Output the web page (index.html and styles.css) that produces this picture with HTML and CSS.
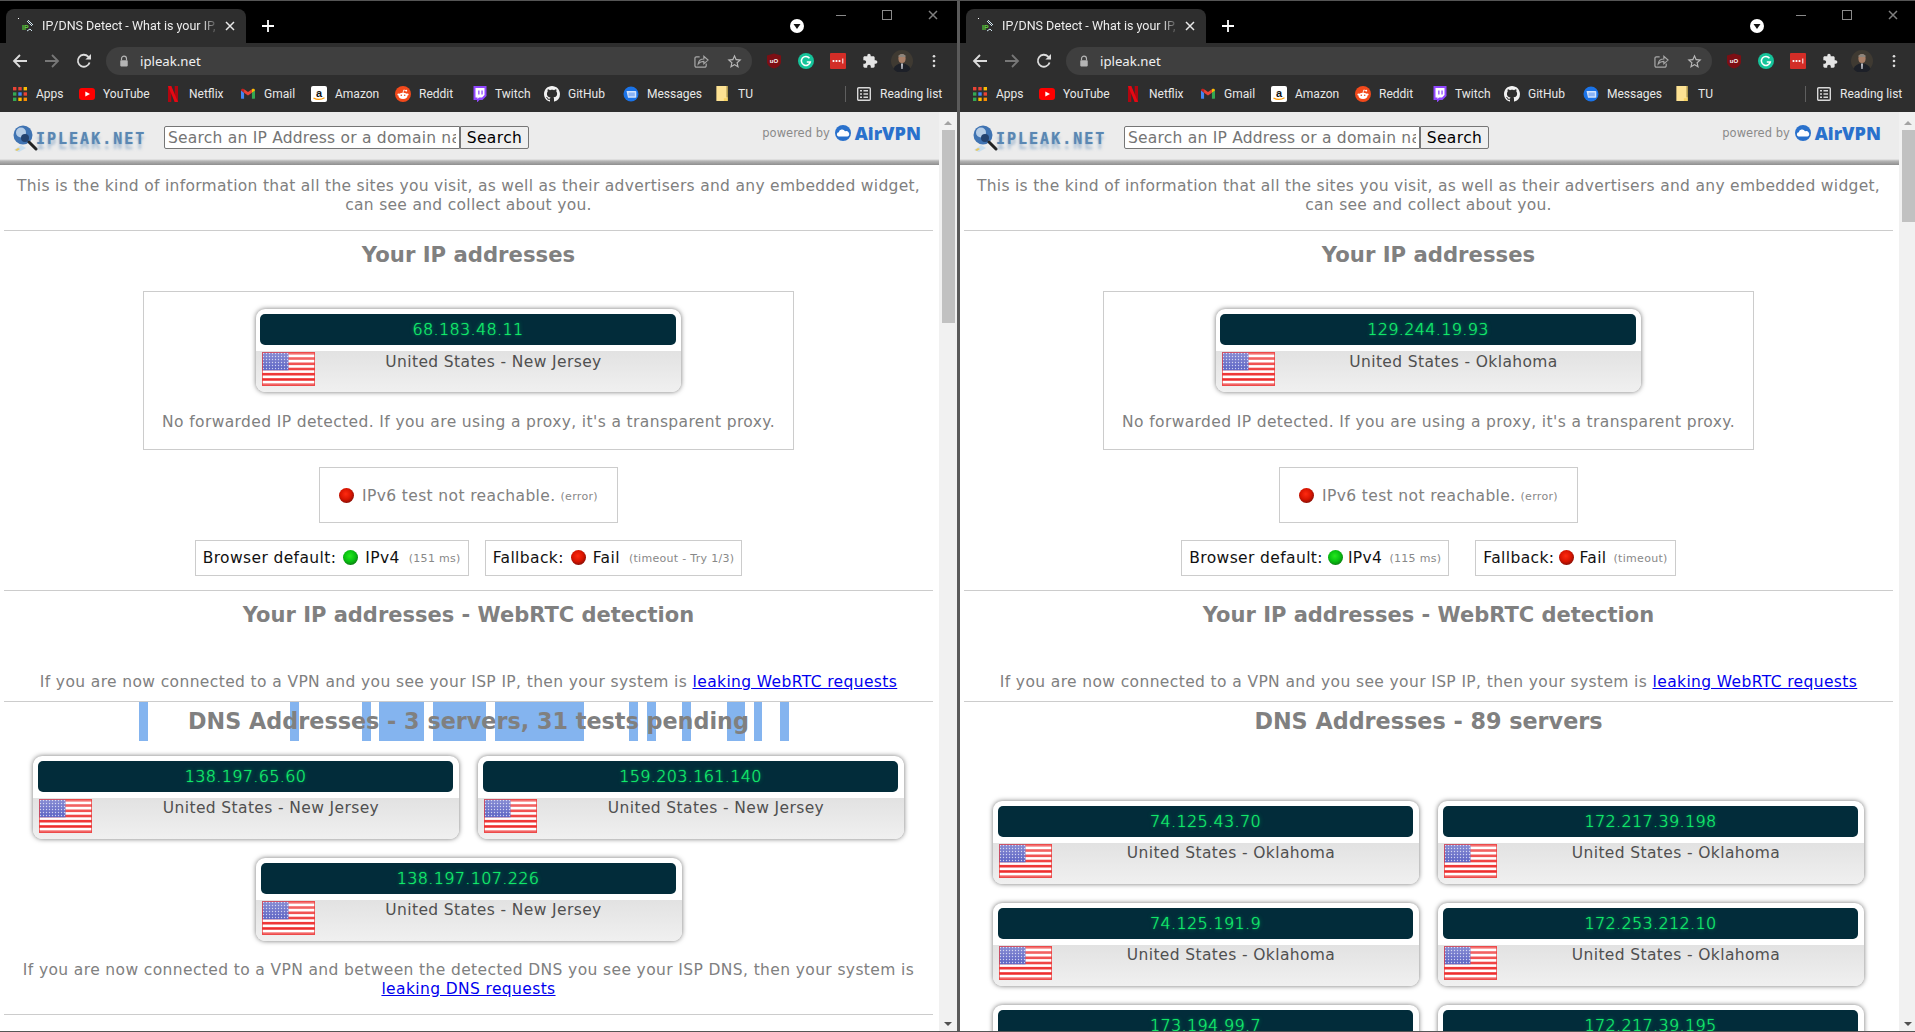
FILE: index.html
```html
<!DOCTYPE html>
<html lang="en">
<head>
<meta charset="utf-8">
<title>IP/DNS Detect</title>
<link rel="stylesheet" href="styles.css">
</head>
<body>
<svg class="defs" aria-hidden="true">
  <defs>
    <linearGradient id="gloss" x1="0" y1="0" x2="0" y2="1">
      <stop offset="0" stop-color="#fff" stop-opacity=".35"/>
      <stop offset=".5" stop-color="#fff" stop-opacity=".12"/>
      <stop offset=".8" stop-color="#fff" stop-opacity="0"/>
      <stop offset="1" stop-color="#fff" stop-opacity=".35"/>
    </linearGradient>
    <pattern id="stars" width="3" height="3" patternUnits="userSpaceOnUse">
      <rect width="3" height="3" fill="#4a52bd"/>
      <circle cx="1.5" cy="1.5" r=".7" fill="#c6c9ee"/>
    </pattern>
  </defs>
  <symbol id="flag" viewBox="0 0 53 34">
    <rect width="53" height="34" fill="#fff"/>
    <rect y="0" width="53" height="2.6" fill="#ee2b2b"/>
    <rect y="5.2" width="53" height="2.6" fill="#ee2b2b"/>
    <rect y="10.5" width="53" height="2.6" fill="#ee2b2b"/>
    <rect y="15.7" width="53" height="2.6" fill="#ee2b2b"/>
    <rect y="20.9" width="53" height="2.6" fill="#ee2b2b"/>
    <rect y="26.2" width="53" height="2.6" fill="#ee2b2b"/>
    <rect y="31.4" width="53" height="2.6" fill="#ee2b2b"/>
    <rect width="26.5" height="18.3" fill="url(#stars)"/>
    <rect width="53" height="34" fill="url(#gloss)"/>
    <rect x=".5" y=".5" width="52" height="33" fill="none" stroke="#e83a3a" stroke-opacity=".7"/>
  </symbol>
  <symbol id="fav" viewBox="0 0 16 16">
    <rect x="0" y="0" width="1" height="1" fill="#fff"/>
    <text x="4" y="12" class="fav-ip">IP</text>
    <path d="M9 3l5 5M10 2l5 5M9 13l3-2 2 2" fill="none" stroke="#cfe3ee" stroke-width="1"/>
  </symbol>
  <symbol id="back" viewBox="0 0 16 16"><path d="M15 8H2M8 2L2 8l6 6" fill="none" stroke="currentColor" stroke-width="1.8"/></symbol>
  <symbol id="fwd" viewBox="0 0 16 16"><path d="M1 8h13M8 2l6 6-6 6" fill="none" stroke="currentColor" stroke-width="1.8"/></symbol>
  <symbol id="reload" viewBox="0 0 16 16"><path d="M13.6 9.5A6 6 0 1 1 12.2 3.6L14 5.2" fill="none" stroke="currentColor" stroke-width="1.8"/><path d="M15 1v5.6H9.4z" fill="currentColor"/></symbol>
  <symbol id="lock" viewBox="0 0 12 14"><path d="M3 6V4.2a3 3 0 0 1 6 0V6" fill="none" stroke="#b5b5b5" stroke-width="1.4"/><rect x="1.5" y="6" width="9" height="7.5" rx="1" fill="#b5b5b5"/></symbol>
  <symbol id="share" viewBox="0 0 16 16"><path d="M6 3H2.5A1.5 1.5 0 0 0 1 4.5v8A1.5 1.5 0 0 0 2.5 14h9a1.5 1.5 0 0 0 1.5-1.5V10" fill="none" stroke="#a8a8a8" stroke-width="1.3"/><path d="M4.500 10.500C5 7 7.500 5.300 10.500 5.300V2.500L15 6.500l-4.500 4V7.800C8 7.800 6 8.600 4.500 10.500z" fill="none" stroke="#a8a8a8" stroke-width="1.2"/></symbol>
  <symbol id="star" viewBox="0 0 24 24"><path fill="#b8b8b8" d="M22 9.24l-7.19-.62L12 2 9.19 8.63 2 9.24l5.46 4.73L5.82 21 12 17.27 18.18 21l-1.63-7.03L22 9.24zM12 15.4l-3.76 2.27 1-4.28-3.32-2.88 4.38-.38L12 6.1l1.71 4.04 4.38.38-3.32 2.88 1 4.28L12 15.4z"/></symbol>
  <symbol id="ublock" viewBox="0 0 16 16"><path d="M8 .5l7 2v6c0 3.500-3 6-7 7-4-1-7-3.500-7-7v-6z" fill="#7d0f14"/><text x="8" y="9.500" class="ub-text">uO</text></symbol>
  <symbol id="gram" viewBox="0 0 16 16"><circle cx="8" cy="8" r="8" fill="#15c39a"/><path d="M11.500 5.200A4.500 4.500 0 1 0 12.300 9H8.800" fill="none" stroke="#fff" stroke-width="1.500"/></symbol>
  <symbol id="lastpass" viewBox="0 0 16 16"><rect width="16" height="16" rx="1" fill="#d32d27"/><circle cx="3.500" cy="8" r="1.100" fill="#fff"/><circle cx="6.500" cy="8" r="1.100" fill="#fff"/><circle cx="9.500" cy="8" r="1.100" fill="#fff"/><rect x="12.300" y="5.500" width="1" height="5" fill="#fff"/></symbol>
  <symbol id="puzzle" viewBox="0 0 24 24"><path fill="#e4e4e4" d="M20.500 11H19V7c0-1.100-.9-2-2-2h-4V3.500C13 2.120 11.880 1 10.500 1S8 2.120 8 3.500V5H4c-1.100 0-1.990.9-1.990 2v3.800H3.500c1.490 0 2.700 1.210 2.700 2.700s-1.210 2.700-2.700 2.700H2V20c0 1.100.9 2 2 2h3.800v-1.500c0-1.490 1.210-2.700 2.700-2.700 1.490 0 2.700 1.210 2.700 2.700V22H17c1.100 0 2-.9 2-2v-4h1.500c1.380 0 2.500-1.120 2.500-2.500S21.880 11 20.500 11z"/></symbol>
  <symbol id="avatar" viewBox="0 0 22 22"><circle cx="11" cy="11" r="11" fill="#3f3a32"/><ellipse cx="11" cy="8.500" rx="3.600" ry="4.500" fill="#a97f67"/><path d="M7.400 5.500Q11 2.500 14.600 5.500L14.200 7H7.800z" fill="#8c857c"/><path d="M2.500 19q2-5.500 8.500-5.500t8.500 5.500a11 11 0 0 1-17 0z" fill="#1d2028"/><path d="M10 13.500h2l-.4 5.500h-1.200z" fill="#c9c9d2"/></symbol>
  <symbol id="dots" viewBox="0 0 4 16"><circle cx="2" cy="2.500" r="1.500" fill="#ddd"/><circle cx="2" cy="8" r="1.500" fill="#ddd"/><circle cx="2" cy="13.500" r="1.500" fill="#ddd"/></symbol>
  <symbol id="apps" viewBox="0 0 14 14">
    <rect x="0" y="0" width="3.400" height="3.400" fill="#ea4335"/><rect x="5.300" y="0" width="3.400" height="3.400" fill="#ea4335"/><rect x="10.600" y="0" width="3.400" height="3.400" fill="#fbbc04"/>
    <rect x="0" y="5.300" width="3.400" height="3.400" fill="#34a853"/><rect x="5.300" y="5.300" width="3.400" height="3.400" fill="#4285f4"/><rect x="10.600" y="5.300" width="3.400" height="3.400" fill="#ea4335"/>
    <rect x="0" y="10.600" width="3.400" height="3.400" fill="#34a853"/><rect x="5.300" y="10.600" width="3.400" height="3.400" fill="#fbbc04"/><rect x="10.600" y="10.600" width="3.400" height="3.400" fill="#fb8c00"/>
  </symbol>
  <symbol id="yt" viewBox="0 0 16 12"><rect width="16" height="12" rx="3" fill="#f00"/><path d="M6.300 3.500L11 6 6.300 8.500z" fill="#fff"/></symbol>
  <symbol id="nf" viewBox="0 0 10 16"><path d="M0 0h3.300v16L0 16z" fill="#b1060f"/><path d="M6.700 0H10v16H6.700z" fill="#b1060f"/><path d="M0 0h3.300L10 16H6.700z" fill="#e50914"/></symbol>
  <symbol id="gm" viewBox="0 0 16 12"><path d="M0 2v9a1 1 0 0 0 1 1h2.500V5z" fill="#4285f4"/><path d="M16 2v9a1 1 0 0 1-1 1h-2.500V5z" fill="#34a853"/><path d="M3.500 5L8 8.300 12.500 5V1L8 4.400 3.500 1z" fill="#ea4335"/><path d="M0 2.500C0 .5 2 0 3.500 1v4z" fill="#c5221f"/><path d="M16 2.500C16 .5 14 0 12.500 1v4z" fill="#fbbc04"/></symbol>
  <symbol id="az" viewBox="0 0 16 16"><rect width="16" height="16" rx="2" fill="#fff"/><text x="8" y="10.500" class="az-text">a</text><path d="M2.500 12q5.500 3 11-.2" fill="none" stroke="#f90" stroke-width="1.300"/></symbol>
  <symbol id="rd" viewBox="0 0 16 16"><circle cx="8" cy="8" r="8" fill="#f2491b"/><ellipse cx="8" cy="9.800" rx="4.500" ry="3.100" fill="#fff"/><circle cx="3.500" cy="8.500" r="1.100" fill="#fff"/><circle cx="12.500" cy="8.500" r="1.100" fill="#fff"/><circle cx="6.300" cy="9.300" r=".8" fill="#f2491b"/><circle cx="9.700" cy="9.300" r=".8" fill="#f2491b"/><path d="M8 7l.7-3 2.300.6" fill="none" stroke="#fff" stroke-width=".8"/><circle cx="11.300" cy="4.700" r=".9" fill="#fff"/></symbol>
  <symbol id="tw" viewBox="0 0 16 16"><path d="M2.500 0H15.500V10L11.500 14H8.500L6 16.500V14H2.500z" fill="#9147ff"/><path d="M4.500 2H13.500V9L11 11.500H8L6.500 13V11.500H4.500z" fill="#fff"/><rect x="7.200" y="4.500" width="1.300" height="4" fill="#9147ff"/><rect x="10.400" y="4.500" width="1.300" height="4" fill="#9147ff"/></symbol>
  <symbol id="gh" viewBox="0 0 16 16"><path fill="#f2f2f2" d="M8 0C3.580 0 0 3.580 0 8c0 3.540 2.290 6.530 5.470 7.590.4.070.55-.17.55-.38 0-.19-.01-.82-.01-1.490-2.010.37-2.530-.49-2.690-.94-.09-.23-.48-.94-.82-1.130-.28-.15-.68-.52-.01-.53.63-.01 1.080.58 1.230.82.72 1.210 1.870.87 2.330.66.07-.52.28-.87.51-1.070-1.780-.2-3.640-.89-3.640-3.950 0-.87.31-1.590.82-2.150-.08-.2-.36-1.020.08-2.120 0 0 .67-.21 2.200.82.64-.18 1.320-.27 2-.27.68 0 1.360.09 2 .27 1.530-1.040 2.200-.82 2.200-.82.44 1.100.16 1.920.08 2.120.51.56.82 1.270.82 2.150 0 3.070-1.870 3.750-3.650 3.950.29.25.54.73.54 1.480 0 1.070-.01 1.930-.01 2.200 0 .21.15.46.55.38A8.013 8.013 0 0016 8c0-4.420-3.580-8-8-8z"/></symbol>
  <symbol id="msg" viewBox="0 0 16 16"><circle cx="8" cy="8" r="7.500" fill="#1a73e8"/><path d="M3.500 5h9a.8.8 0 0 1 .8.8V11a.8.8 0 0 1-.8.8H5z" fill="#d2e3fc"/><path d="M5.500 6.500h6.300v3.800H5.500z" fill="#8ab4f8"/></symbol>
  <symbol id="tu" viewBox="0 0 12 16"><path d="M0 0h11v12h1v4H0z" fill="#fde293"/><path d="M11 0h1v16H8v-3h3z" fill="#f8d464"/></symbol>
  <symbol id="rl" viewBox="0 0 14 14"><rect x=".7" y=".7" width="12.600" height="12.600" rx="1" fill="none" stroke="#d8d8d8" stroke-width="1.400"/><path d="M3 3.800h2M3 7h2M3 10.200h2M6.500 3.800h4.500M6.500 7h4.500M6.500 10.200h4.500" stroke="#d8d8d8" stroke-width="1.400"/></symbol>
  <symbol id="media" viewBox="0 0 14 14"><circle cx="7" cy="7" r="7" fill="#fff"/><path d="M3.500 5h7L7 10z" fill="#111"/></symbol>
  <symbol id="close" viewBox="0 0 10 10"><path d="M1 1l8 8M9 1l-8 8" stroke="#e8e8e8" stroke-width="1.500"/></symbol>
  <symbol id="plus" viewBox="0 0 12 12"><path d="M6 0v12M0 6h12" stroke="#fff" stroke-width="1.800"/></symbol>
  <symbol id="logoglass" viewBox="0 0 26 28">
    <path d="M2 25l7-5 5 3-7 4z" fill="#c9dff0"/><path d="M3 25l3-2 2 1-3 2z" fill="#e9c75e"/>
    <circle cx="11" cy="10" r="9.500" fill="#3f73b2"/><circle cx="9" cy="7.500" r="5" fill="#b6cde6"/><circle cx="13" cy="13" r="4" fill="#24436f"/>
    <path d="M17 17l7 7" stroke="#222" stroke-width="3" stroke-linecap="round"/>
  </symbol>
  <symbol id="airvpn" viewBox="0 0 16 16"><circle cx="8" cy="8" r="8" fill="#2a71cc"/><path d="M3.500 11.500a2.200 2.200 0 0 1 .3-4.300A3.300 3.300 0 0 1 10 6.300a2.700 2.700 0 0 1 2.500 5.200z" fill="#fff"/></symbol>
</svg>

<main class="desktop">

  <section class="window">
    <header class="tabstrip">
      <div class="tab">
        <svg class="fav"><use href="#fav"/></svg>
        <span class="tab-title">IP/DNS Detect - What is your IP, what's</span>
        <svg class="tab-close"><use href="#close"/></svg>
      </div>
      <svg class="new-tab"><use href="#plus"/></svg>
      <svg class="media"><use href="#media"/></svg>
      <div class="controls"><i class="ctl-min"></i><i class="ctl-max"></i><svg class="ctl-close"><use href="#close"/></svg></div>
    </header>
    <div class="toolbar">
      <svg class="nav nav-on"><use href="#back"/></svg>
      <svg class="nav nav-off"><use href="#fwd"/></svg>
      <svg class="nav nav-on"><use href="#reload"/></svg>
      <div class="omnibox">
        <svg class="lock"><use href="#lock"/></svg>
        <span class="url">ipleak.net</span>
        <svg class="omni-share"><use href="#share"/></svg>
        <svg class="omni-star"><use href="#star"/></svg>
      </div>
      <svg class="ext"><use href="#ublock"/></svg>
      <svg class="ext"><use href="#gram"/></svg>
      <svg class="ext"><use href="#lastpass"/></svg>
      <svg class="ext"><use href="#puzzle"/></svg>
      <svg class="avatar"><use href="#avatar"/></svg>
      <svg class="menu"><use href="#dots"/></svg>
    </div>
    <nav class="bookmarks">
      <a class="bm"><svg class="i-apps"><use href="#apps"/></svg>Apps</a>
      <a class="bm"><svg class="i-yt"><use href="#yt"/></svg>YouTube</a>
      <a class="bm"><svg class="i-nf"><use href="#nf"/></svg>Netflix</a>
      <a class="bm"><svg class="i-gm"><use href="#gm"/></svg>Gmail</a>
      <a class="bm"><svg class="i-16"><use href="#az"/></svg>Amazon</a>
      <a class="bm"><svg class="i-16"><use href="#rd"/></svg>Reddit</a>
      <a class="bm"><svg class="i-16"><use href="#tw"/></svg>Twitch</a>
      <a class="bm"><svg class="i-16"><use href="#gh"/></svg>GitHub</a>
      <a class="bm"><svg class="i-16"><use href="#msg"/></svg>Messages</a>
      <a class="bm"><svg class="i-tu"><use href="#tu"/></svg>TU</a>
      <span class="bm-sep"></span>
      <a class="bm bm-rl"><svg class="i-apps"><use href="#rl"/></svg>Reading list</a>
    </nav>
    <div class="viewport">
      <div class="page">
        <div class="site-head">
          <div class="logo"><svg class="logo-glass"><use href="#logoglass"/></svg><span class="logo-text">IPLEAK.NET</span></div>
          <input class="search" type="text" placeholder="Search an IP Address or a domain name">
          <button class="search-btn" type="button">Search</button>
          <div class="powered"><span>powered by</span><svg class="air-icon"><use href="#airvpn"/></svg><b class="air-name">AirVPN</b></div>
        </div>
        <div class="content">
          <p class="intro">This is the kind of information that all the sites you visit, as well as their advertisers and any embedded widget, can see and collect about you.</p>
          <hr>
          <h2 class="title title-ip">Your IP addresses</h2>
          <div class="ip-box">
            <div class="card card-center"><div class="ip">68.183.48.11</div><div class="geo"><svg class="flag"><use href="#flag"/></svg><span class="place">United States - New Jersey</span></div></div>
            <p class="forward">No forwarded IP detected. If you are using a proxy, it's a transparent proxy.</p>
          </div>
          <div class="v6-box"><i class="dot dot-red"></i><span class="v6-text">IPv6 test not reachable.</span> <small class="note">(error)</small></div>
          <div class="tests">
            <div class="test"><span>Browser default:</span><i class="dot dot-green"></i><span>IPv4</span><small class="note">(151 ms)</small></div>
            <div class="test"><span>Fallback:</span><i class="dot dot-red"></i><span>Fail</span><small class="note">(timeout - Try 1/3)</small></div>
          </div>
          <hr class="hr-webrtc">
          <h2 class="title title-webrtc">Your IP addresses - WebRTC detection</h2>
          <p class="line line-webrtc">If you are now connected to a VPN and you see your ISP IP, then your system is <a href="#">leaking WebRTC requests</a></p>
          <hr class="hr-dns">
          <h2 class="title title-dns title-selected">DNS Addresses - 3 servers, 31 tests pending</h2>
          <div class="dns-grid">
            <div class="card"><div class="ip">138.197.65.60</div><div class="geo"><svg class="flag"><use href="#flag"/></svg><span class="place">United States - New Jersey</span></div></div>
            <div class="card"><div class="ip">159.203.161.140</div><div class="geo"><svg class="flag"><use href="#flag"/></svg><span class="place">United States - New Jersey</span></div></div>
            <div class="card card-span"><div class="ip">138.197.107.226</div><div class="geo"><svg class="flag"><use href="#flag"/></svg><span class="place">United States - New Jersey</span></div></div>
          </div>
          <p class="line line-dns">If you are now connected to a VPN and between the detected DNS you see your ISP DNS, then your system is <a href="#">leaking DNS requests</a></p>
          <hr class="hr-torrent">
          <h2 class="title title-torrent">Torrent Address detection</h2>
        </div>
      </div>
      <div class="scrollbar"><i class="arrow-up"></i><i class="thumb thumb-long"></i><i class="arrow-down"></i></div>
    </div>
  </section>

  <div class="divider"></div>

  <section class="window">
    <header class="tabstrip">
      <div class="tab">
        <svg class="fav"><use href="#fav"/></svg>
        <span class="tab-title">IP/DNS Detect - What is your IP, what's</span>
        <svg class="tab-close"><use href="#close"/></svg>
      </div>
      <svg class="new-tab"><use href="#plus"/></svg>
      <svg class="media"><use href="#media"/></svg>
      <div class="controls"><i class="ctl-min"></i><i class="ctl-max"></i><svg class="ctl-close"><use href="#close"/></svg></div>
    </header>
    <div class="toolbar">
      <svg class="nav nav-on"><use href="#back"/></svg>
      <svg class="nav nav-off"><use href="#fwd"/></svg>
      <svg class="nav nav-on"><use href="#reload"/></svg>
      <div class="omnibox">
        <svg class="lock"><use href="#lock"/></svg>
        <span class="url">ipleak.net</span>
        <svg class="omni-share"><use href="#share"/></svg>
        <svg class="omni-star"><use href="#star"/></svg>
      </div>
      <svg class="ext"><use href="#ublock"/></svg>
      <svg class="ext"><use href="#gram"/></svg>
      <svg class="ext"><use href="#lastpass"/></svg>
      <svg class="ext"><use href="#puzzle"/></svg>
      <svg class="avatar"><use href="#avatar"/></svg>
      <svg class="menu"><use href="#dots"/></svg>
    </div>
    <nav class="bookmarks">
      <a class="bm"><svg class="i-apps"><use href="#apps"/></svg>Apps</a>
      <a class="bm"><svg class="i-yt"><use href="#yt"/></svg>YouTube</a>
      <a class="bm"><svg class="i-nf"><use href="#nf"/></svg>Netflix</a>
      <a class="bm"><svg class="i-gm"><use href="#gm"/></svg>Gmail</a>
      <a class="bm"><svg class="i-16"><use href="#az"/></svg>Amazon</a>
      <a class="bm"><svg class="i-16"><use href="#rd"/></svg>Reddit</a>
      <a class="bm"><svg class="i-16"><use href="#tw"/></svg>Twitch</a>
      <a class="bm"><svg class="i-16"><use href="#gh"/></svg>GitHub</a>
      <a class="bm"><svg class="i-16"><use href="#msg"/></svg>Messages</a>
      <a class="bm"><svg class="i-tu"><use href="#tu"/></svg>TU</a>
      <span class="bm-sep"></span>
      <a class="bm bm-rl"><svg class="i-apps"><use href="#rl"/></svg>Reading list</a>
    </nav>
    <div class="viewport">
      <div class="page">
        <div class="site-head">
          <div class="logo"><svg class="logo-glass"><use href="#logoglass"/></svg><span class="logo-text">IPLEAK.NET</span></div>
          <input class="search" type="text" placeholder="Search an IP Address or a domain name">
          <button class="search-btn" type="button">Search</button>
          <div class="powered"><span>powered by</span><svg class="air-icon"><use href="#airvpn"/></svg><b class="air-name">AirVPN</b></div>
        </div>
        <div class="content">
          <p class="intro">This is the kind of information that all the sites you visit, as well as their advertisers and any embedded widget, can see and collect about you.</p>
          <hr>
          <h2 class="title title-ip">Your IP addresses</h2>
          <div class="ip-box">
            <div class="card card-center"><div class="ip">129.244.19.93</div><div class="geo"><svg class="flag"><use href="#flag"/></svg><span class="place">United States - Oklahoma</span></div></div>
            <p class="forward">No forwarded IP detected. If you are using a proxy, it's a transparent proxy.</p>
          </div>
          <div class="v6-box"><i class="dot dot-red"></i><span class="v6-text">IPv6 test not reachable.</span> <small class="note">(error)</small></div>
          <div class="tests tests-wide">
            <div class="test"><span>Browser default:</span><i class="dot dot-green"></i><span>IPv4</span><small class="note">(115 ms)</small></div>
            <div class="test"><span>Fallback:</span><i class="dot dot-red"></i><span>Fail</span><small class="note">(timeout)</small></div>
          </div>
          <hr class="hr-webrtc">
          <h2 class="title title-webrtc">Your IP addresses - WebRTC detection</h2>
          <p class="line line-webrtc">If you are now connected to a VPN and you see your ISP IP, then your system is <a href="#">leaking WebRTC requests</a></p>
          <hr class="hr-dns">
          <h2 class="title title-dns">DNS Addresses - 89 servers</h2>
          <div class="dns-grid dns-grid-low">
            <div class="card"><div class="ip">74.125.43.70</div><div class="geo"><svg class="flag"><use href="#flag"/></svg><span class="place">United States - Oklahoma</span></div></div>
            <div class="card"><div class="ip">172.217.39.198</div><div class="geo"><svg class="flag"><use href="#flag"/></svg><span class="place">United States - Oklahoma</span></div></div>
            <div class="card"><div class="ip">74.125.191.9</div><div class="geo"><svg class="flag"><use href="#flag"/></svg><span class="place">United States - Oklahoma</span></div></div>
            <div class="card"><div class="ip">172.253.212.10</div><div class="geo"><svg class="flag"><use href="#flag"/></svg><span class="place">United States - Oklahoma</span></div></div>
            <div class="card"><div class="ip">173.194.99.7</div><div class="geo"><svg class="flag"><use href="#flag"/></svg><span class="place">United States - Oklahoma</span></div></div>
            <div class="card"><div class="ip">172.217.39.195</div><div class="geo"><svg class="flag"><use href="#flag"/></svg><span class="place">United States - Oklahoma</span></div></div>
          </div>
        </div>
      </div>
      <div class="scrollbar"><i class="arrow-up"></i><i class="thumb thumb-short"></i><i class="arrow-down"></i></div>
    </div>
  </section>
</main>
</body>
</html>
```
FILE: styles.css
```css
* { box-sizing: border-box; }
html, body { margin: 0; height: 100%; overflow: hidden; background: #555; }
.defs { position: absolute; width: 0; height: 0; }
.fav-ip { font: 700 7px "Liberation Sans", sans-serif; fill: #5ecb3c; }
.ub-text { font: 700 6px "Liberation Sans", sans-serif; fill: #fff; text-anchor: middle; }
.az-text { font: 700 11px "Liberation Sans", sans-serif; fill: #111; text-anchor: middle; }

.desktop { display: flex; width: 1915px; height: 1032px; overflow: hidden; padding: 1px 0; }
.window { flex: 0 0 957px; width: 957px; display: flex; flex-direction: column; height: 1030px; }
.divider { flex: 0 0 3px; background: #5a5a5a; }

/* tab strip */
.tabstrip { height: 42px; background: #000; display: flex; align-items: flex-end; padding-left: 6px; position: relative; }
.tab { width: 240px; height: 34px; background: #2e2e2e; border-radius: 8px 8px 0 0; display: flex; align-items: center; padding: 0 10px 0 12px; }
.fav { width: 16px; height: 16px; flex: none; }
.tab-title { flex: 1; margin-left: 8px; font: 12.500px/16px Roboto, sans-serif; color: #ececec; white-space: nowrap; overflow: hidden; -webkit-mask-image: linear-gradient(90deg, #000 90%, transparent 100%); mask-image: linear-gradient(90deg, #000 90%, transparent 100%); }
.tab-close { width: 10px; height: 10px; flex: none; margin-left: 6px; margin-right: 1px; }
.new-tab { width: 12px; height: 12px; margin: 0 0 11px 16px; flex: none; }
.media { width: 14px; height: 14px; flex: none; margin: 0 0 10px 516px; }
.controls { position: absolute; top: 0; right: 0; width: 138px; height: 30px; display: flex; align-items: center; }
.ctl-min { position: absolute; left: 17px; top: 14px; width: 10px; height: 1px; background: #8a8a8a; }
.ctl-max { position: absolute; left: 63px; top: 9px; width: 10px; height: 10px; border: 1px solid #8a8a8a; }
.ctl-close { position: absolute; left: 109px; top: 9px; width: 10px; height: 10px; opacity: .55; }

/* toolbar */
.toolbar { height: 36px; background: #2e2e2e; display: flex; align-items: center; padding-left: 12px; }
.nav { width: 16px; height: 16px; flex: none; margin-right: 16px; }
.nav-on { color: #dcdcdc; }
.nav-off { color: #777; }
.toolbar .nav:nth-of-type(3) { margin-right: 14px; }
.omnibox { width: 646px; height: 28px; border-radius: 14px; background: #3f3f3f; display: flex; align-items: center; padding-left: 13px; flex: none; }
.lock { width: 10px; height: 12px; flex: none; }
.url { margin-left: 11px; font: 13.200px/18px "Noto Sans", sans-serif; color: #f0f0f0; flex: 1; }
.omni-share { width: 15px; height: 15px; flex: none; margin-right: 17px; }
.omni-star { width: 17px; height: 17px; flex: none; margin-right: 9px; }
.ext { width: 16px; height: 16px; flex: none; margin-right: 16px; }
.omnibox + .ext { margin-left: 14px; }
.avatar { width: 22px; height: 22px; flex: none; margin-left: -3px; }
.menu { width: 4px; height: 14px; flex: none; margin-left: 19px; }

/* bookmarks */
.bookmarks { height: 33px; padding-bottom: 4px; background: #2e2e2e; display: grid; grid-template-columns: 66px 89px 73px 70px 84px 76px 73px 79px 93px 129px 1px 1fr; align-items: center; padding-left: 13px; }
.bm { display: flex; align-items: center; font: 12px/16px Roboto, sans-serif; color: #e8e8e8; white-space: nowrap; }
.bm svg { flex: none; }
.i-apps { width: 14px; height: 14px; margin-right: 9px; }
.i-yt { width: 16px; height: 12px; margin-right: 8px; }
.i-nf { width: 10px; height: 16px; margin-right: 11px; }
.i-gm { width: 14px; height: 11px; margin-right: 9px; }
.i-16 { width: 16px; height: 16px; margin-right: 8px; }
.i-tu { width: 12px; height: 15px; margin-right: 10px; }
.bm-sep { height: 16px; width: 1px; background: #5f5f5f; }
.bm-rl { margin-left: 11px; }

/* page frame */
.viewport { flex: 1; display: flex; min-height: 0; background: #fff; }
.page { width: 939px; flex: none; overflow: hidden; display: flex; flex-direction: column; font-family: "DejaVu Sans", Verdana, sans-serif; }
.scrollbar { width: 18px; flex: none; background: #f1f1f1; display: flex; flex-direction: column; align-items: center; position: relative; }
.arrow-up { margin-top: 9px; width: 0; height: 0; border: 4px solid transparent; border-top: 0; border-bottom: 4px solid #a3a3a3; }
.thumb { width: 13px; background: #c1c1c1; margin-top: 5px; }
.thumb-long { height: 193px; }
.thumb-short { height: 92px; }
.arrow-down { margin-top: auto; margin-bottom: 5px; width: 0; height: 0; border: 4px solid transparent; border-bottom: 0; border-top: 4px solid #505050; }

.site-head { height: 53px; flex: none; display: flex; align-items: flex-start; padding-top: 14px; padding-left: 12px; background: linear-gradient(180deg, #ececec 0, #ececec 47px, #b5b5b5 49px, #8e8e8e 53px); }
.logo { width: 152px; flex: none; display: flex; align-items: flex-start; }
.logo-glass { width: 26px; height: 28px; flex: none; margin-top: -1px; }
.logo-text { margin: 5px 0 0 -2px; font: 700 15px/16px "DejaVu Sans Mono", monospace; letter-spacing: 2px; color: #5a87b3; text-shadow: 0 5px 3px rgba(110,150,190,.55), 0 0 1px rgba(90,135,179,.6); }
.search { width: 296px; height: 23px; flex: none; margin: 0; padding: 0 3px; border: 1px solid #767676; border-radius: 2px 0 0 2px; background: #fff; font: 15.500px "DejaVu Sans", sans-serif; letter-spacing: .22px; color: #111; }
.search::placeholder { color: #757575; }
.search-btn { width: 69px; height: 23px; flex: none; padding: 0; border: 1px solid #767676; border-radius: 0 2px 2px 0; background: #efefef; font: 15.500px "DejaVu Sans", sans-serif; letter-spacing: .38px; color: #000; }
.powered { margin-left: auto; margin-right: 18px; margin-top: -3px; display: flex; align-items: center; gap: 5px; font-size: 11.500px; line-height: 20px; color: #8a8a8a; white-space: nowrap; }
.air-icon { width: 16px; height: 16px; flex: none; }
.air-name { margin-left: -1px; font: 800 18px/20px "Open Sans", sans-serif; color: #2a71cc; }

/* content */
.content { flex: 1; padding: 0 6px 0 4px; text-align: center; color: #808080; font-size: 15.500px; letter-spacing: .38px; line-height: 19px; overflow: hidden; }
.content p { margin: 0; }
.content hr { border: 0; height: 1px; background: #ccc; margin: 0; }
.intro { padding: 12px 8px 0; margin-bottom: 15px !important; letter-spacing: .3px; }
.title { margin: 0; font-size: 21px; font-weight: 700; line-height: 28px; color: #808080; letter-spacing: 0; }
.title-ip { margin: 10px 0 22px; font-size: 21.200px; }
.ip-box { width: 651px; height: 159px; margin: 0 auto; border: 1px solid #ccc; padding-top: 17px; }
.forward { margin-top: 21px !important; }
.v6-box { width: 299px; height: 56px; margin: 17px auto 0; border: 1px solid #ccc; display: flex; align-items: center; padding-left: 19px; padding-top: 2px; white-space: pre; }
.v6-text { margin-left: 8px; }
.v6-box .note { margin-left: 5px; }
.dot { width: 15px; height: 15px; flex: none; border-radius: 50%; margin-top: -2px; }
.dot-red { background: radial-gradient(circle at 45% 40%, #ff2a10 0, #d81400 45%, #5a0c0a 92%, #777 100%); }
.dot-green { background: radial-gradient(circle at 45% 40%, #25e81e 0, #08c010 45%, #0d5a14 92%, #777 100%); }
.note { font-size: 11px; color: #888; letter-spacing: .3px; }
.tests { display: flex; justify-content: center; gap: 16px; margin-top: 17px; }
.test { height: 36px; border: 1px solid #ccc; display: flex; align-items: center; gap: 7px; padding: 0 7px; color: #111; white-space: nowrap; }
.test .note { margin-left: 2px; }
.tests-wide { gap: 26px; }
.tests-wide .test { gap: 5px; }
.hr-webrtc { margin-top: 14px !important; }
.title-webrtc { margin-top: 10px; }
.line-webrtc { margin-top: 44px !important; }
.line a, .line-dns a { color: #00e; }
.hr-dns { margin-top: 9px !important; }
.title-dns { height: 39px; line-height: 38px; font-size: 22.300px; }
.title-selected {
  background-image: linear-gradient(90deg,
    transparent 135px, #84b4ef 135px, #84b4ef 144px, transparent 144px,
    transparent 286px, #84b4ef 286px, #84b4ef 295px, transparent 295px,
    transparent 358px, #84b4ef 358px, #84b4ef 367px, transparent 367px,
    transparent 375px, #84b4ef 375px, #84b4ef 420px, transparent 420px,
    transparent 429px, #84b4ef 429px, #84b4ef 482px, transparent 482px,
    transparent 491px, #84b4ef 491px, #84b4ef 580px, transparent 580px,
    transparent 625px, #84b4ef 625px, #84b4ef 634px, transparent 634px,
    transparent 643px, #84b4ef 643px, #84b4ef 652px, transparent 652px,
    transparent 678px, #84b4ef 678px, #84b4ef 687px, transparent 687px,
    transparent 723px, #84b4ef 723px, #84b4ef 741px, transparent 741px,
    transparent 750px, #84b4ef 750px, #84b4ef 758px, transparent 758px,
    transparent 776px, #84b4ef 776px, #84b4ef 785px, transparent 785px);
}
.dns-grid { display: grid; grid-template-columns: 426px 426px; column-gap: 19px; row-gap: 19px; margin: 15px 0 0 29px; }
.dns-grid-low { margin-top: 60px; }
.card-span { grid-column: 1 / 3; justify-self: center; width: 425px; }
.line-dns { margin: 20px 8px 0 !important; }
.hr-torrent { margin-top: 15px !important; }
.title-torrent { margin-top: 13px; }

/* result card */
.card { width: 426px; height: 83px; border-radius: 9px; background: #fff; box-shadow: 0 0 5px rgba(0,0,0,.55); padding: 5px 0 0; text-align: center; overflow: hidden; display: flex; flex-direction: column; letter-spacing: .38px; }
.card-center { margin: 0 auto; width: 425px; }
.ip { flex: none; height: 31px; margin: 0 6px 0 5px; border-radius: 5px; background: #022c3a; color: #12f06c; font: 200 16px/32px "DejaVu Sans", sans-serif; letter-spacing: .35px; text-shadow: 0 0 1px #12f06c, 0 0 4px rgba(18,240,108,.55); }
.card-center .ip { margin: 0 5px 0 4px; }
.geo { flex: 1; margin-top: 6px; display: flex; align-items: flex-start; padding: 1px 0 0 6px; background: linear-gradient(180deg, #e2e2e2, #f0f0f0); }
.flag { width: 53px; height: 34px; flex: none; }
.place { flex: 1; padding: 1px 9px 0 0; color: #505050; line-height: 19px; }
.dns-grid .place { padding-top: 0; }
```
